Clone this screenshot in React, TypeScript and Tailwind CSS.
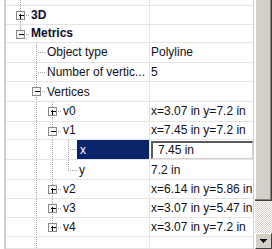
import React from "react";

type Row = {
  h: number;
  level: number;
  anc: number[];
  name?: string;
  value?: string;
  bold?: boolean;
  exp?: "+" | "-";
  last?: boolean;
  stub?: boolean;
  selected?: boolean;
  editing?: boolean;
};

const ROWS: Row[] = [
  { h: 6, level: 0, anc: [], stub: true },
  { h: 19, level: 0, anc: [], name: "3D", bold: true, exp: "+" },
  { h: 19, level: 0, anc: [], name: "Metrics", bold: true, exp: "-", last: true },
  { h: 20, level: 1, anc: [], name: "Object type", value: "Polyline" },
  { h: 20, level: 1, anc: [], name: "Number of vertic...", value: "5" },
  { h: 20, level: 1, anc: [], name: "Vertices", exp: "-" },
  { h: 20, level: 2, anc: [1], name: "v0", exp: "+", value: "x=3.07 in y=7.2 in" },
  { h: 19, level: 2, anc: [1], name: "v1", exp: "-", value: "x=7.45 in y=7.2 in" },
  { h: 20, level: 3, anc: [1, 2], name: "x", value: "7.45 in", selected: true, editing: true },
  { h: 21, level: 3, anc: [1, 2], name: "y", value: "7.2 in", last: true },
  { h: 19, level: 2, anc: [1], name: "v2", exp: "+", value: "x=6.14 in y=5.86 in" },
  { h: 19, level: 2, anc: [1], name: "v3", exp: "+", value: "x=3.07 in y=5.47 in" },
  { h: 20, level: 2, anc: [1], name: "v4", exp: "+", value: "x=3.07 in y=7.2 in", last: true },
  { h: 12, level: 1, anc: [], stub: true },
];

const LINE = "#a0a0a0";
const cx = (l: number) => 14 + 16 * l;

// tree guide lines + expander box for one row
function TreeLines({ row }: { row: Row }) {
  const h = row.h - 1;
  const mid = Math.floor(h / 2) + 0.5;
  const c = cx(row.level) + 0.5;
  const w = cx(row.level) + 9;
  return (
    <svg width={w} height={h} className="shrink-0" shapeRendering="crispEdges">
      {row.anc.map((a) => (
        <line key={a} x1={cx(a) + 0.5} x2={cx(a) + 0.5} y1={0} y2={h} stroke={LINE} strokeDasharray="1 1" />
      ))}
      {row.stub ? (
        <line x1={c} x2={c} y1={0} y2={h} stroke={LINE} strokeDasharray="1 1" />
      ) : (
        <>
          <line x1={c} x2={c} y1={0} y2={row.exp ? mid - 4 : mid} stroke={LINE} strokeDasharray="1 1" />
          {!row.last && (
            <line x1={c} x2={c} y1={row.exp ? mid + 5 : mid} y2={h} stroke={LINE} strokeDasharray="1 1" />
          )}
          <line x1={row.exp ? c + 5 : c + 1} x2={w} y1={mid} y2={mid} stroke={LINE} strokeDasharray="1 1" />
          {row.exp && (
            <g>
              <rect x={c - 4} y={mid - 4} width={8} height={8} fill="#f4f4f4" stroke="#8a8a8a" />
              <line x1={c - 2} x2={c + 3} y1={mid} y2={mid} stroke="#000" />
              {row.exp === "+" && <line x1={c} x2={c} y1={mid - 2} y2={mid + 3} stroke="#000" />}
            </g>
          )}
        </>
      )}
    </svg>
  );
}

function PropRow({ row }: { row: Row }) {
  return (
    <div className="flex border-b border-[#e4e4e4] overflow-hidden" style={{ height: row.h }}>
      <div className="w-[144px] shrink-0 flex items-start border-r border-[#e4e4e4] overflow-hidden">
        <TreeLines row={row} />
        {row.name && (
          <div
            className={`flex-1 h-full flex items-center pl-[2px] whitespace-nowrap overflow-hidden ${
              row.bold ? "font-bold text-[#0c0c2c]" : "text-[#101020]"
            } ${row.selected ? "bg-[#0a246a] text-white pl-[3px]" : ""}`}
          >
            {row.name}
          </div>
        )}
      </div>
      <div className="flex-1 flex items-center min-w-0 overflow-hidden">
        {row.editing ? (
          <div className="ml-[1px] w-full h-[18px] flex items-center pl-[5px] bg-white border-t-2 border-l-2 border-t-[#5a5a5a] border-l-[#5a5a5a] border-r border-b border-r-[#d4d0c8] border-b-[#d4d0c8] text-[#101020]">
            {row.value}
          </div>
        ) : (
          row.value && <div className="pl-[1px] whitespace-nowrap text-[#101020]">{row.value}</div>
        )}
      </div>
    </div>
  );
}

function ScrollBar() {
  return (
    <div className="w-[18px] shrink-0 flex flex-col border-l border-white">
      <div className="h-[201px] bg-[#d4d0c8] border-r border-b border-r-[#404040] border-b-[#404040] shadow-[inset_-1px_-1px_0_#808080,inset_1px_0_0_#ffffff]" />
      <div className="flex-1 bg-[repeating-conic-gradient(#d4d0c8_0_25%,#ffffff_0_50%)] bg-[length:2px_2px]" />
      <div className="h-[16px] bg-[#d4d0c8] border-t border-l border-t-white border-l-white border-r border-b border-r-[#404040] border-b-[#404040] flex items-center justify-center">
        <svg width="7" height="4" viewBox="0 0 7 4" shapeRendering="crispEdges">
          <polygon points="0,0 7,0 3.5,4" fill="#000" />
        </svg>
      </div>
    </div>
  );
}

export default function App() {
  return (
    <div
      className="w-[272px] h-[249px] bg-white flex overflow-hidden text-[12px] leading-none"
      style={{ fontFamily: '"Liberation Sans", Arial, sans-serif' }}
    >
      <div className="w-[4px] shrink-0 bg-white" />
      <div className="w-[2px] shrink-0 bg-[#d4d0c8]" />
      <div className="flex-1 flex flex-col overflow-hidden border-r border-[#cfcfcf]">
        {ROWS.map((r, i) => (
          <PropRow key={i} row={r} />
        ))}
      </div>
      <ScrollBar />
    </div>
  );
}
